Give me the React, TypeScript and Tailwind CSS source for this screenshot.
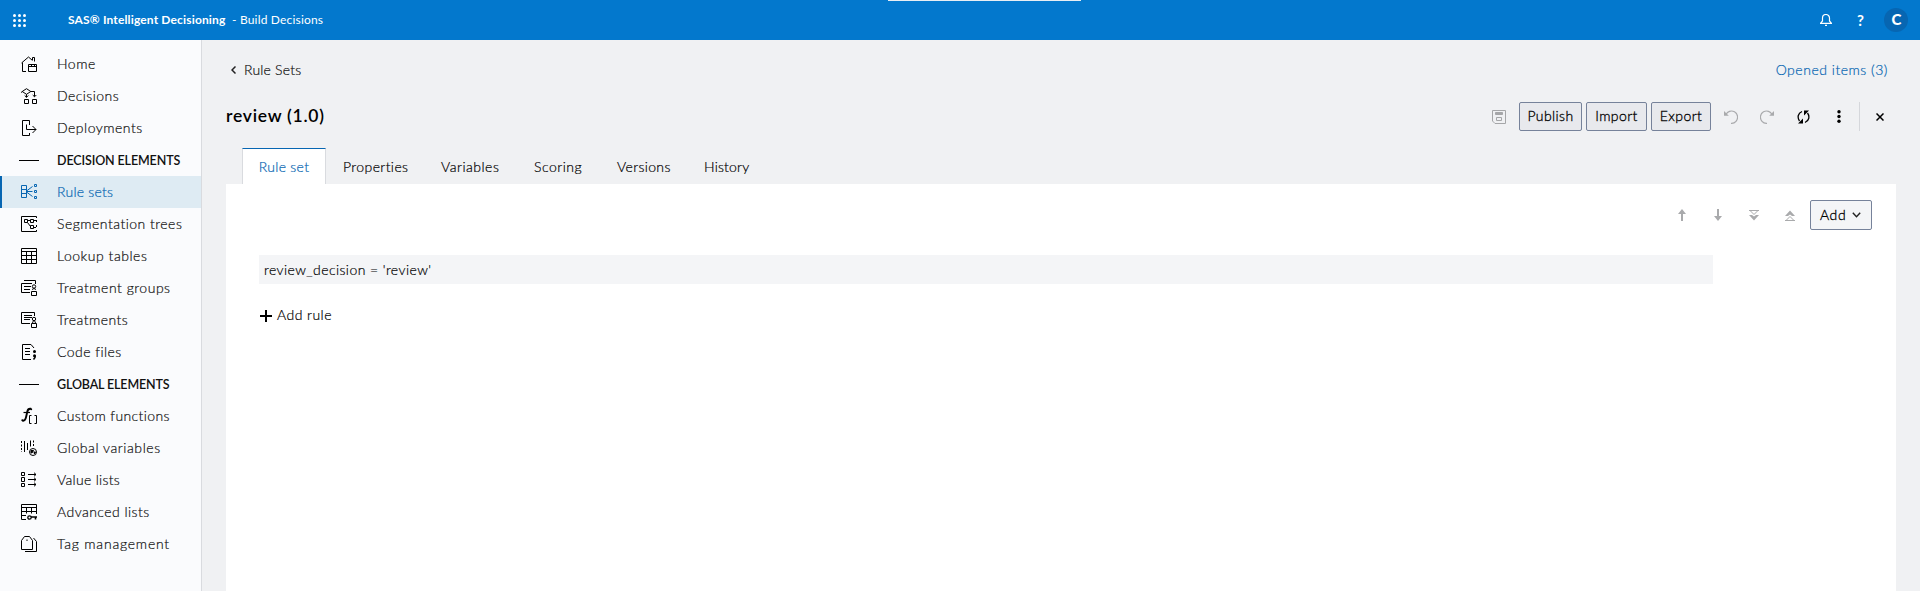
import React from "react";

type IconName =
  | "home" | "decisions" | "deploy" | "rules" | "tree" | "table" | "groups"
  | "treat" | "code" | "fn" | "vars" | "values" | "adv" | "tag";

const icons: Record<IconName, React.ReactNode> = {
  home: <path d="M.5 7 7.5 1l4 3.500M1.500 6.500v9H5M11.500 4V1.500h2v4M7.500 8.500h8v7h-8zM7.500 10.500h8M10.500 8.500v2M13.500 8.500v2" />,
  decisions: <path d="M5.500.700 9.800 3.500 5.500 6.300 1.200 3.500zM0 4.500l1.500-1M9.500 3.500h4v5M5.500 6.300v3M3.700 7.500l1.800 1.800 1.800-1.800M11.700 7l1.800 1.800L15.300 7M3.500 11.500h4v4h-4zM11.500 11.500h4v4h-4z" />,
  deploy: <path d="M8.500 5V.500h-7v15h7V13M5.500 4.500v5H15M11.500 6l3.500 3.500L11.500 13" />,
  rules: <path d="M.500 1.500h5v12h-5zM.500 5.500h5M.500 9.500h5M5.500 7.500h6M5.500 7l6-4.500M5.500 8l6 4.500M13.500.500h2v2h-2zM13.500 6.500h2v2h-2zM13.500 12.500h2v2h-2z" />,
  tree: <path d="M15.500 2V.500H.500v15h15V14M15.500 4v2M15.500 9v2M3.500 3.500h3v3h-3zM9.500 3.500h3v3h-3zM6.500 4.500h3M6.500 6.500l3 4M9.500 9.500h3v3h-3zM12.500 4.500H15M12.500 11.500H15" />,
  table: <path d="M.500.500h15v15H.500zM.500 3.500h15M.500 7.500h15M.500 11.500h15M5.500 3.500v12M10.500 3.500v12" />,
  groups: (
    <>
      <path d="M3 .500h11.500V4M9 12.500H.500v-9H11M3 6.500h7M3 9.500h6" />
      <circle cx="13" cy="6.500" r="1.700" />
      <path d="M12.500 8 11.500 10M13.500 8l1 2M10.500 11.500h5v4h-5z" />
    </>
  ),
  treat: (
    <>
      <path d="M9 11.500H.500V.500h13V4M3 3.500h8M3 5.500h8M3 7.500h6" />
      <circle cx="13" cy="7" r="1.700" />
      <path d="M12.500 8.500 11.500 11M13.500 8.500l1 2.500M10.500 11.500h5v4h-5z" />
    </>
  ),
  code: (
    <>
      <path d="M10 15.500H1.500V.500h8.500l3 3.500M4 4.500h5M4 7.500h5M4 10.500h5" />
      <path strokeWidth="1.500" d="M14 11.500v2L12.500 15.500" />
      <circle cx="13.500" cy="7.500" r="1.500" fill="currentColor" stroke="none" />
      <circle cx="13.500" cy="11.800" r="1.500" fill="currentColor" stroke="none" />
    </>
  ),
  fn: (
    <>
      <path strokeWidth="1.900" d="M1.500 12.600c2 .6 3-1 3.700-4.100l1-4.500C6.700 1.500 7.500.3 10 .8" />
      <path strokeWidth="1.200" d="M2.500 4.500h6.500" />
      <path d="M10.500 7.500h-2v8h2M13.500 7.500h2v8h-2" />
      <circle cx="1.300" cy="12.300" r="1" fill="currentColor" stroke="none" />
      <circle cx="10.200" cy="1.300" r="1" fill="currentColor" stroke="none" />
    </>
  ),
  vars: (
    <>
      <path strokeDasharray="2 1.500" d="M.500 1v11M12.500.500v6" />
      <path d="M3.500 1v11M6.500 3v7M9.500.500v6" />
      <circle cx="12" cy="12" r="3.500" />
      <path fill="currentColor" d="M10 10.500h2.500l-1 2-1.500.500zM13 12h1.500l-1 2z" />
    </>
  ),
  values: <path d="M.500.500h3v3h-3zM.500 5.500h3v4h-3zM.500 11.500h3v3h-3zM7 2.500h8M7 7.500h8M7 12.500h8M13 .700l2 1.800-2 1.800M13 5.700l2 1.800-2 1.800M13 10.700l2 1.800-2 1.800" />,
  adv: (
    <>
      <path d="M15.500 10V.500H.500v15H5M.500 3.500h15M.500 7.500h15M.500 11.500H5M5.500 3.500v6M10.500 3.500v6" />
      <circle cx="8.500" cy="13.500" r="1.700" strokeWidth="1.300" />
      <path strokeWidth="1.600" d="M10 13h6M14.500 13v2.500" />
    </>
  ),
  tag: <path d="M.500 13.500V4.500L3.500.500h5L11.500 4.500v9zM4 15.500h11.500V5.500L12.500 2M6 3.500v1.500" />,
};

function NavIcon({ name }: { name: IconName }) {
  return (
    <svg className="block h-4 w-4 overflow-visible" viewBox="0 0 16 16" fill="none" stroke="currentColor" strokeWidth="1">
      {icons[name]}
    </svg>
  );
}

type Item = { label: string; icon?: IconName; active?: boolean; track: string };

const items: Item[] = [
  { label: "Home", icon: "home", track: "tracking-[0.500px]" },
  { label: "Decisions", icon: "decisions", track: "tracking-[0.450px]" },
  { label: "Deployments", icon: "deploy", track: "tracking-[0.500px]" },
  { label: "DECISION ELEMENTS", track: "tracking-[-0.120px]" },
  { label: "Rule sets", icon: "rules", active: true, track: "tracking-[0.250px]" },
  { label: "Segmentation trees", icon: "tree", track: "tracking-[0.480px]" },
  { label: "Lookup tables", icon: "table", track: "tracking-[0.530px]" },
  { label: "Treatment groups", icon: "groups", track: "tracking-[0.510px]" },
  { label: "Treatments", icon: "treat", track: "tracking-[0.450px]" },
  { label: "Code files", icon: "code", track: "tracking-[0.450px]" },
  { label: "GLOBAL ELEMENTS", track: "tracking-[-0.150px]" },
  { label: "Custom functions", icon: "fn", track: "tracking-[0.380px]" },
  { label: "Global variables", icon: "vars", track: "tracking-[0.560px]" },
  { label: "Value lists", icon: "values", track: "tracking-[0.300px]" },
  { label: "Advanced lists", icon: "adv", track: "tracking-[0.450px]" },
  { label: "Tag management", icon: "tag", track: "tracking-[0.780px]" },
];

const thin = "font-light [-webkit-text-stroke:0.2px]";

function Sidebar() {
  return (
    <nav className="w-[202px] shrink-0 border-r border-[#d9dbdf] bg-[#fafbfd] pt-2">
      {items.map((it) => (
        <div
          key={it.label}
          className={`flex h-8 items-center border-l-2 ${it.active ? "border-[#0766b2] bg-[#deebf3] text-[#0766b2]" : "border-transparent text-black"}`}
        >
          {it.icon ? (
            <span className="ml-[19px] w-9 shrink-0"><NavIcon name={it.icon} /></span>
          ) : (
            <span className="ml-[17px] mr-[18px] h-px w-5 shrink-0 bg-black" />
          )}
          <span
            className={`whitespace-nowrap leading-4 ${it.track} ${it.icon ? `pb-px text-[14px] ${thin}` : "pt-px text-[12.500px] font-semibold text-[#111]"} ${it.icon && !it.active ? "text-[#111]" : ""}`}
          >
            {it.label}
          </span>
        </div>
      ))}
    </nav>
  );
}

function TopBar() {
  return (
    <header className="relative flex h-10 shrink-0 items-center bg-[#0378cd] text-white">
      <svg className="ml-[13px] h-[13px] w-[13px]" viewBox="0 0 13 13" fill="currentColor">
        {[1.5, 6.5, 11.5].map((y) => [1.5, 6.5, 11.5].map((x) => <circle key={`${x}-${y}`} cx={x} cy={y} r="1.500" />))}
      </svg>
      <span className="ml-[42px] w-[164px] whitespace-nowrap text-[12px] font-bold tracking-[0.150px]">SAS® Intelligent Decisioning</span>
      <span className="text-[12px] tracking-[0.180px]">- Build Decisions</span>
      <div className="absolute left-[888px] top-0 h-px w-[193px] bg-[#e8eef4]" />
      <svg className="ml-auto h-3 w-3" viewBox="0 0 12 12" fill="none" stroke="currentColor" strokeWidth="1.200">
        <path d="M.500 9.400h11L9.500 7V4A3.500 3.500 0 0 0 2.500 4v3zM5 11.400h2" />
      </svg>
      <span className="ml-[25px] w-[10px] text-[15px] font-bold">?</span>
      <span className="ml-[17px] mr-3 flex h-6 w-6 items-center justify-center rounded-full bg-[#0766b2] text-[15px] font-black"><span className="-mt-0.5 ml-px">C</span></span>
    </header>
  );
}

function Button({ label, width }: { label: string; width: string }) {
  return (
    <button className={`${width} h-[29px] rounded-[2px] border border-[#76829a] bg-[#e8e9ed] pb-0.5 text-[14px] font-light tracking-[0.400px] text-black [-webkit-text-stroke:0.3px]`}>
      {label}
    </button>
  );
}

const tabs = [
  { label: "Properties", w: "w-[98px] tracking-[0.400px]" },
  { label: "Variables", w: "w-[93px] tracking-[0.500px]" },
  { label: "Scoring", w: "w-[83px] tracking-[0.500px]" },
  { label: "Versions", w: "w-[87px] tracking-[0.350px]" },
  { label: "History", w: "w-[60px] tracking-[0.200px]" },
];

function HeaderActions() {
  return (
    <div className="ml-auto flex items-center">
      <svg className="mr-[13px] h-[14px] w-[14px]" viewBox="0 0 14 14" fill="none" stroke="#a5a6a8">
        <path d="M.500.500h13v13H3L.500 11zM4.500 7.500h5v3h-5z" />
        <path fill="#a5a6a8" d="M3.500 2.500h7v2h-7z" />
      </svg>
      <div className="flex gap-1">
        <Button label="Publish" width="w-[63px]" />
        <Button label="Import" width="w-[61px]" />
        <Button label="Export" width="w-[60px]" />
      </div>
      <svg className="ml-[13px] h-[14px] w-[14px]" viewBox="0 0 14 14" fill="none" stroke="#a9aaac" strokeWidth="1.200">
        <path d="M2 4.500C3.500 1.500 7 0 10.500 1.800c3.500 2 4 6.500 1.500 9.500-1.200 1.400-3 2.200-5 2" />
        <path fill="#a9aaac" stroke="none" d="M0 1v4.800h4.800z" />
      </svg>
      <svg className="ml-[22px] h-[14px] w-[14px]" viewBox="0 0 14 14" fill="none" stroke="#a9aaac" strokeWidth="1.200">
        <path d="M12 4.500C10.500 1.500 7 0 3.500 1.800c-3.500 2-4 6.500-1.500 9.500 1.200 1.400 3 2.200 5 2" />
        <path fill="#a9aaac" stroke="none" d="M14 1v4.800H9.200z" />
      </svg>
      <svg className="ml-[23px] h-[14px] w-[13px]" viewBox="0 0 13 14" fill="none" stroke="#000" strokeWidth="1.300">
        <path d="M5 1.500C1 3 0 7.500 2.500 11M8 12.500c4-1.500 5-6 2.500-9.500" />
        <path fill="#000" stroke="none" d="M6 8.500V13.500H1zM7 5.500V.500h5z" />
      </svg>
      <svg className="ml-[27px] h-[13px] w-1" viewBox="0 0 4 13">
        <circle cx="2" cy="1.700" r="1.700" /><circle cx="2" cy="6.500" r="1.700" /><circle cx="2" cy="11.300" r="1.700" />
      </svg>
      <span className="ml-[18px] h-[29px] w-px bg-[#d5d7db]" />
      <svg className="ml-4 mr-3 h-2 w-2" viewBox="0 0 8 8" stroke="#000" strokeWidth="1.500"><path d="m.500.500 7 7M7.500.500l-7 7" /></svg>
    </div>
  );
}

function RuleToolbar() {
  return (
    <div className="mr-6 flex h-[30px] items-center justify-end">
      <svg className="mr-7 h-3 w-2" viewBox="0 0 8 12" fill="#a9aaac"><path d="M4 0 8 5H5v7H3V5H0z" /></svg>
      <svg className="mr-[27px] h-3 w-2" viewBox="0 0 8 12" fill="#a9aaac"><path d="M4 12 0 7h3V0h2v7h3z" /></svg>
      <svg className="mr-[26px] h-[11px] w-[10px]" viewBox="0 0 10 11" fill="none" stroke="#a9aaac">
        <path d="M0 .500h10M1.500 1 5 4.500 8.500 1" /><path fill="#a9aaac" stroke="none" d="M0 5h3l2 1.500L7 5h3l-5 5.500z" />
      </svg>
      <svg className="mr-[15px] h-[11px] w-[10px]" viewBox="0 0 10 11" fill="none" stroke="#a9aaac">
        <path d="M0 10.500h10M1.500 10 5 6.500 8.500 10" /><path fill="#a9aaac" stroke="none" d="M0 6h3l2-1.500L7 6h3L5 .500z" />
      </svg>
      <button className="flex h-[30px] w-[62px] items-center rounded-[2px] border border-[#76829a] bg-[#f4f5f7] pb-px pl-[9px] text-[14px] font-light tracking-[0.600px] text-black [-webkit-text-stroke:0.3px]">
        <span className="w-8 text-left">Add</span>
        <svg className="h-[6px] w-[9px]" viewBox="0 0 9 6" fill="none" stroke="#222" strokeWidth="1.400"><path d="m.800.800 3.700 4 3.700-4" /></svg>
      </button>
    </div>
  );
}

export default function App() {
  return (
    <div className="flex h-[591px] w-[1920px] flex-col overflow-hidden bg-[#f0f1f3] font-[Lato,sans-serif]">
      <TopBar />
      <div className="flex min-h-0 flex-1">
        <Sidebar />
        <main className="flex min-w-0 flex-1 flex-col pl-6 pr-6">
          <div className={`mt-[22px] flex h-4 items-center text-[14px] ${thin}`}>
            <svg className="ml-[5px] h-2 w-[5px]" viewBox="0 0 5 8" fill="none" stroke="#222" strokeWidth="1.500"><path d="M4.500.500 1 4l3.500 3.500" /></svg>
            <span className="ml-2 pb-px tracking-[0.200px] text-[#111]">Rule Sets</span>
            <span className="ml-auto mr-2 pb-px tracking-[0.520px] text-[#0766b2]">Opened items (3)</span>
          </div>
          <div className="mt-6 flex h-[29px] items-center">
            <h1 className="text-[17.500px] font-semibold tracking-[0.750px]">review (1.0)</h1>
            <HeaderActions />
          </div>
          <div className={`mt-[17px] flex h-9 items-center pl-4 text-[14px] ${thin}`}>
            <div className="mr-[17px] flex h-9 w-[84px] items-center justify-center border-x border-t border-x-[#d9dbdf] border-t-[#0766b2] bg-white tracking-[0.300px] text-[#0766b2]">Rule set</div>
            {tabs.map((t) => <span key={t.label} className={t.w}>{t.label}</span>)}
          </div>
          <section className="flex-1 bg-white pt-4">
            <RuleToolbar />
            <div className={`ml-[33px] mt-[25px] flex h-[29px] w-[1454px] items-center bg-[#f4f5f7] pl-[5px] text-[14px] tracking-[0.420px] ${thin}`}>review_decision = 'review'</div>
            <div className={`ml-[34px] mt-[20px] flex h-[21px] items-center text-[14px] tracking-[0.450px] ${thin}`}>
              <svg className="mr-[5px] mt-[3px] h-3 w-3" viewBox="0 0 12 12" stroke="#000" strokeWidth="2"><path d="M6 0v12M0 6h12" /></svg>
              Add rule
            </div>
          </section>
        </main>
      </div>
    </div>
  );
}
